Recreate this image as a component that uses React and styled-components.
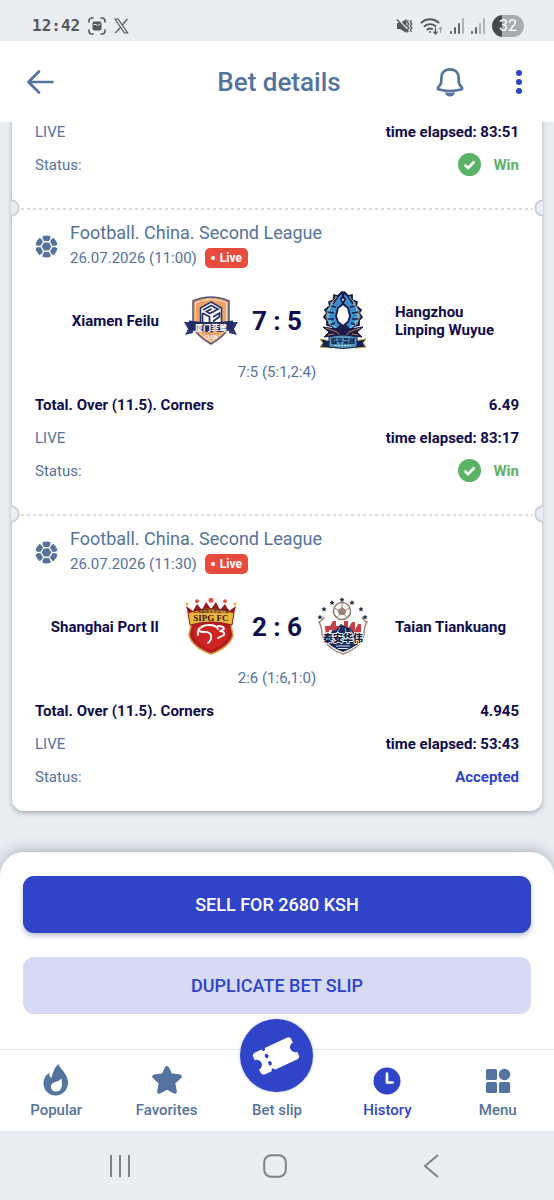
import React from 'react';
import styled, { createGlobalStyle } from 'styled-components';

const c = {
  page: '#eaeef3',
  slate: '#55739f',
  navy: '#0f0b4f',
  blue: '#3044c8',
  green: '#5bb368',
  red: '#e84c3d',
  system: '#7f8289',
};

const Global = createGlobalStyle`
  * { box-sizing: border-box; }
  body { margin: 0; background: ${c.page}; font-family: Roboto, "Noto Sans CJK SC", sans-serif; }
  button { font: inherit; border: 0; padding: 0; background: none; cursor: pointer; }
  svg { display: block; flex: none; }
`;

const Screen = styled.div`
  min-height: 100vh;
  display: flex;
  flex-direction: column;
  overflow: hidden;
`;

const StatusBar = styled.div`
  height: 41px;
  padding: 10px 30px 0 32px;
  display: flex;
  align-items: center;
  justify-content: space-between;
  color: #55585c;
`;

const StatusGroup = styled.div`
  display: flex;
  align-items: center;
  gap: ${(p) => p.$gap}px;
`;

const Clock = styled.time`
  font: bold 16px/20px "DejaVu Sans Mono", monospace;
`;

const Battery = styled.span`
  width: 32px;
  height: 22px;
  border-radius: 11px;
  display: flex;
  align-items: center;
  justify-content: center;
  background: linear-gradient(90deg, #45474a 32%, #a9acb0 32%);
  color: #fff;
  font-size: 16px;
  line-height: 22px;
`;

const Header = styled.header`
  position: relative;
  z-index: 1;
  height: 81px;
  padding: 0 32px 0 24px;
  display: grid;
  grid-template-columns: 1fr auto 1fr;
  align-items: center;
  background: #fff;
  color: ${c.slate};
`;

const Title = styled.h1`
  margin: 0;
  padding-left: 12px;
  font-size: 26px;
  line-height: 32px;
  font-weight: 500;
`;

const HeaderActions = styled.div`
  display: flex;
  align-items: center;
  justify-content: flex-end;
  gap: 52px;
`;

const IconButton = styled.button`
  justify-self: start;
  display: flex;
  color: ${(p) => (p.$accent ? c.blue : c.slate)};
`;

const Content = styled.main`
  flex: 1;
  margin-top: -7px;
  padding: 0 12px 41px;
`;

const Slip = styled.div`
  background: #fff;
  border-radius: 0 0 12px 12px;
  box-shadow: 0 2px 5px rgba(60, 66, 90, 0.4);
`;

const Event = styled.section`
  position: relative;
  padding: 0 23px 27px;

  & + & {
    padding-top: 13px;
    background: repeating-linear-gradient(90deg, #d8dce5 0 3px, transparent 3px 6px) 9px 0 / calc(100% - 18px) 2px no-repeat;
  }
  &:last-child { padding-bottom: 18px; }
`;

const Notch = styled.i`
  position: absolute;
  top: -9px;
  ${(p) => p.$side}: -1px;
  width: 10px;
  height: 18px;
  background: radial-gradient(circle at ${(p) => p.$side} center, ${c.page} 0 6px, #c3c7d0 8px, transparent 9px);
`;

const EventHead = styled.div`
  display: flex;
  align-items: center;
  gap: 12px;
  color: ${c.slate};
`;

const League = styled.div`
  font-size: 18px;
  line-height: 24px;
`;

const Kickoff = styled.div`
  display: flex;
  align-items: center;
  gap: 8px;
  font-size: 15px;
  line-height: 26px;
`;

const LiveTag = styled.span`
  height: 20px;
  padding: 0 6px;
  display: flex;
  align-items: center;
  gap: 5px;
  border-radius: 5px;
  background: ${c.red};
  color: #fff;
  font-size: 12px;
  line-height: 20px;
  font-weight: 700;

  &::before {
    content: '';
    width: 4px;
    height: 4px;
    border-radius: 50%;
    background: #fff;
  }
`;

const Match = styled.div`
  height: 60px;
  margin-top: 20px;
  display: grid;
  grid-template-columns: 1fr 56px 76px 56px 1fr;
  align-items: center;
  color: ${c.navy};
`;

const Team = styled.div`
  padding: ${(p) => (p.$home ? '0 24px 0 0' : '0 8px 0 24px')};
  text-align: ${(p) => (p.$home ? 'right' : 'left')};
  font-size: 15px;
  line-height: 18px;
  font-weight: 700;
`;

const Score = styled.div`
  text-align: center;
  font-size: 26px;
  line-height: 32px;
  font-weight: 700;
`;

const Periods = styled.div`
  margin: 9px 0 4px;
  text-align: center;
  color: ${c.slate};
  font-size: 15px;
  line-height: 24px;
`;

const Row = styled.div`
  height: 33px;
  display: flex;
  align-items: center;
  justify-content: space-between;
  color: ${(p) => (p.$strong ? c.navy : c.slate)};
  font-size: 15px;
  font-weight: ${(p) => (p.$strong ? 700 : 400)};
`;

const Value = styled.span`
  display: flex;
  align-items: center;
  gap: 12px;
  color: ${(p) => p.$color || c.navy};
  font-weight: 700;
`;

const Sheet = styled.div`
  position: relative;
  padding: 24px 23px 35px;
  display: grid;
  gap: 24px;
  background: #fff;
  border-radius: 24px 24px 0 0;
  box-shadow: 0 -2px 14px rgba(60, 66, 90, 0.35);
`;

const SheetButton = styled.button`
  height: 57px;
  border-radius: 11px;
  background: ${(p) => (p.$primary ? c.blue : '#d6daf4')};
  color: ${(p) => (p.$primary ? '#fff' : c.blue)};
  box-shadow: ${(p) => (p.$primary ? '0 3px 5px rgba(40, 50, 110, 0.3)' : 'none')};
  font-size: 18px;
  font-weight: 500;
`;

const TabBar = styled.nav`
  position: relative;
  height: 82px;
  padding: 0 1px;
  display: grid;
  grid-template-columns: repeat(5, 1fr);
  background: #fff;
  border-top: 1px solid #e3e6ec;
`;

const Tab = styled.button`
  position: relative;
  padding-bottom: 10px;
  display: flex;
  flex-direction: column;
  align-items: center;
  justify-content: flex-end;
  gap: 3px;
  color: ${(p) => (p.$active ? c.blue : c.slate)};
  font-size: 15px;
  line-height: 22px;
  font-weight: 500;
`;

const SlipBadge = styled.span`
  position: absolute;
  top: -31px;
  left: calc(50% - 37px);
  width: 73px;
  height: 73px;
  border-radius: 50%;
  display: flex;
  align-items: center;
  justify-content: center;
  background: ${c.blue};
  color: #fff;
  box-shadow: 0 0 3px rgba(48, 68, 200, 0.35);
`;

const SystemNav = styled.nav`
  height: 69px;
  padding: 0 45px 0 42px;
  display: grid;
  grid-template-columns: repeat(3, 1fr);
  align-items: center;
  justify-items: center;
`;

const SystemButton = styled.button`
  display: flex;
  color: ${c.system};
`;

/* ---------- icons ---------- */

const CaptureIcon = () => (
  <svg width="18" height="18" viewBox="0 0 18 18" fill="none" stroke="currentColor" strokeWidth="1.6" strokeLinecap="round">
    <path d="M1 5V4a3 3 0 0 1 3-3h1M13 1h1a3 3 0 0 1 3 3v1M17 13v1a3 3 0 0 1-3 3h-1M5 17H4a3 3 0 0 1-3-3v-1" />
    <rect x="4.500" y="4.500" width="9" height="9" rx="2" fill="currentColor" stroke="none" />
    <path d="M6 7.500h2l1.500 1 2.500-1.500" stroke={c.page} strokeWidth="1" />
  </svg>
);

const XIcon = () => (
  <svg width="15" height="16" viewBox="0 0 15 16" fill="none" stroke="currentColor" strokeWidth="1.2">
    <path d="M1 1h3.2l9.4 14h-3.2zM13.5 1L8.2 7M6.3 9.3L1.2 15" />
  </svg>
);

const MuteIcon = () => (
  <svg width="17" height="16" viewBox="0 0 17 16">
    <path d="M1 5h3L10.500 1v14L4 11H1z" fill="currentColor" />
    <path d="M2 1l11 12" stroke={c.page} strokeWidth="1.300" />
    <path d="M1 1.500l11 12.500" stroke="currentColor" strokeWidth="1.300" />
    <path d="M12.300 2l-1 2 1.500 2-1.500 2 1.500 2-1.500 2 1 2M15.300 2l-1 2 1.500 2-1.500 2 1.500 2-1.500 2 1 2" fill="none" stroke="currentColor" strokeWidth="1.300" />
  </svg>
);

const WifiIcon = () => (
  <svg width="23" height="18" viewBox="0 0 23 18" fill="none" stroke="currentColor" strokeWidth="2" strokeLinecap="round">
    <path d="M1.500 5.500a13 13 0 0 1 17 0M4.500 9.200a9 9 0 0 1 11-.2M7.500 12.500a4 4 0 0 1 4.500-.5" />
    <circle cx="10" cy="15" r="1" fill="currentColor" stroke="none" />
    <path d="M15.500 11v5.500M13.800 15l1.700 2 1.700-2" strokeWidth="1.300" />
    <path d="M20.500 15.500v-5M19 12l1.500-1.700L22 12" strokeWidth="1.100" stroke="#9b9ea3" />
  </svg>
);

const SignalIcon = ({ level }) => (
  <svg width="14" height="16" viewBox="0 0 14 16" strokeWidth="1.800" strokeLinecap="round">
    {[14, 10, 6, 1].map((y, i) => (
      <path key={y} d={`M${1 + i * 4} ${y}V15`} stroke={i < level ? 'currentColor' : '#a9acb1'} />
    ))}
  </svg>
);

const BackIcon = () => (
  <svg width="30" height="26" viewBox="0 0 30 26" fill="none" stroke="currentColor" strokeWidth="2.700" strokeLinecap="round" strokeLinejoin="round">
    <path d="M28.500 13H4.500M15 2.500L4.500 13 15 23.500" />
  </svg>
);

const BellIcon = () => (
  <svg width="28" height="30" viewBox="0 0 28 30" fill="none" stroke="currentColor" strokeWidth="2.700" strokeLinejoin="round">
    <path d="M14 2.300c-5.600 0-8.600 3.700-8.600 8.700 0 5-.4 7-3.400 9.500v1.800c7 2 17 2 24 0v-1.800c-3-2.500-3.400-4.500-3.400-9.500 0-5-3-8.700-8.600-8.700z" />
    <path d="M9 25.300c3 .5 7 .5 10 0-.6 3-2.600 4.200-5 4.200s-4.400-1.200-5-4.200z" fill="currentColor" stroke="none" />
  </svg>
);

const DotsIcon = () => (
  <svg width="6" height="26" viewBox="0 0 6 26" fill="currentColor">
    <circle cx="3" cy="4" r="3" />
    <circle cx="3" cy="13" r="3" />
    <circle cx="3" cy="22" r="3" />
  </svg>
);

const BallIcon = () => (
  <svg width="23" height="23" viewBox="-12 -12 24 24">
    <circle r="11.500" fill={c.slate} />
    {[0, 60, 120, 180, 240, 300].map((a) => (
      <g key={a} transform={`rotate(${a})`}>
        <path d="M5 0H9" stroke="#fff" strokeWidth="1.400" />
        <path d="M8 0L12.500-2.500 11.500 0 12.500 2.500z" fill="#fff" />
      </g>
    ))}
    <path d="M-2.900-5h5.800L5.800 0 2.900 5h-5.800L-5.800 0z" fill={c.slate} stroke="#fff" strokeWidth="1.400" />
  </svg>
);

const CheckIcon = () => (
  <svg width="23" height="23" viewBox="0 0 23 23">
    <circle cx="11.500" cy="11.500" r="11.500" fill={c.green} />
    <path d="M6.700 11.800l3.400 3.300 6.300-6.600" fill="none" stroke="#fff" strokeWidth="2.700" />
  </svg>
);

const FlameIcon = () => (
  <svg width="26" height="32" viewBox="0 0 26 32">
    <path d="M15.500 0c.5 4.500 9.500 9 9.500 18.500C25 26 19.500 31.500 12.700 31.500S.5 26 .5 19.500C.5 14.500 3 11 6.200 8.700c0 2.500.5 4.300 2.300 5.300C9.800 9 11 4 15.500 0z" fill="currentColor" />
    <path d="M18.500 14.500c.6 3 .5 5.500.2 8-.4 3-2.600 5-5.500 5-3.300 0-5.200-2.200-5.200-4.800 0-3 2.300-4.200 5-5 2.300-.7 4.200-1.500 5.500-3.200z" fill="#fff" />
  </svg>
);

const StarIcon = () => (
  <svg width="32" height="32" viewBox="0 0 32 32" fill="currentColor" stroke="currentColor" strokeWidth="4" strokeLinejoin="round">
    <path d="M16 4l3.600 7.300 9.200 1.300-6.600 6.200 1.700 8.900-7.900-4.300-7.900 4.300 1.700-8.900-6.600-6.200 9.200-1.300z" />
  </svg>
);

const HistoryIcon = () => (
  <svg width="28" height="30" viewBox="0 0 28 30">
    <circle cx="14" cy="15" r="13.500" fill="currentColor" />
    <path d="M14 7.500v9h5.500" fill="none" stroke="#fff" strokeWidth="2.700" strokeLinecap="round" strokeLinejoin="round" />
  </svg>
);

const MenuIcon = () => (
  <svg width="26" height="30" viewBox="0 0 26 30" fill="currentColor">
    <rect x="1" y="3" width="11" height="11" rx="1.500" />
    <circle cx="19.500" cy="8.500" r="5.700" />
    <rect x="1" y="16" width="11" height="11" rx="1.500" />
    <rect x="14" y="16" width="11" height="11" rx="1.500" />
  </svg>
);

const TicketIcon = () => (
  <svg width="50" height="44" viewBox="-25 -22 50 44">
    <g transform="rotate(-25)">
      <path d="M-17.500-12H17.500Q21-12 21-8.500V-5A5 5 0 0 0 21 5V8.500Q21 12 17.500 12H-17.500Q-21 12-21 8.500V5A5 5 0 0 0-21-5V-8.500Q-21-12-17.500-12z" fill="currentColor" />
      <g fill={c.blue}>
        <ellipse cx="-8.500" cy="-12" rx="1.700" ry="2.300" />
        <ellipse cx="-8.500" cy="-4" rx="1.800" ry="2.300" />
        <ellipse cx="-8.500" cy="4" rx="1.800" ry="2.300" />
        <ellipse cx="-8.500" cy="12" rx="1.700" ry="2.300" />
      </g>
    </g>
  </svg>
);

const RecentsIcon = () => (
  <svg width="22" height="22" viewBox="0 0 22 22" stroke="currentColor" strokeWidth="2">
    <path d="M2 0v22M11 0v22M20 0v22" />
  </svg>
);

const HomeIcon = () => (
  <svg width="24" height="24" viewBox="0 0 24 24" fill="none" stroke="currentColor" strokeWidth="2">
    <rect x="1.200" y="1.200" width="21.600" height="21.600" rx="7" />
  </svg>
);

const PrevIcon = () => (
  <svg width="16" height="24" viewBox="0 0 16 24" fill="none" stroke="currentColor" strokeWidth="2">
    <path d="M15 1L2 12l13 11" />
  </svg>
);

/* ---------- club crests ---------- */

const XiamenCrest = () => (
  <svg width="56" height="60" viewBox="0 0 56 60">
    <path d="M10 10Q28 2 46 10V34Q45 43 28 53 11 43 10 34z" fill="#f0a063" stroke="#4d5784" strokeWidth="1.500" />
    <path d="M12.500 12Q28 5 43.500 12V34Q42 42 28 50.500 14 42 12.500 34z" fill="none" stroke="#fbe3d0" strokeWidth="1" />
    <path d="M28 11l10.500 6V32h-21V17z" fill="#fff" stroke="#26336e" strokeWidth="1.500" />
    <path d="M20 19l8-4.500 7 3.500-8 4.500-3.500-2 5-2.800M19.500 22l7 3.700V32M19.500 22v9M30 26l6.500-4v3.500l-6.500 5" fill="none" stroke="#26336e" strokeWidth="1.800" />
    <path d="M1 31l9 0v11l-8 2 3-6zM55 31l-9 0v11l8 2-3-6z" fill="#2d3970" />
    <path d="M6 29.500Q28 33 50 29.500V39Q28 43.500 6 39z" fill="#202d69" />
    <text x="28" y="39.500" textAnchor="middle" fontSize="8" fontWeight="900" fill="#fff">厦门菲鹭</text>
    <text x="28" y="47.500" textAnchor="middle" fontSize="5" fontWeight="700" fill="#fff">CLUB</text>
  </svg>
);

const HangzhouCrest = () => (
  <svg width="56" height="60" viewBox="0 0 56 60">
    {[1, -1].map((s) => (
      <g key={s} transform={s === 1 ? undefined : 'translate(56 0) scale(-1 1)'} strokeLinejoin="round">
        <path d="M27 1l-4 4-4-1 0 5-5 2 1 4-5 4 2 3-3 4 3 3 0 5 5 1 5 5 6 2V35l-5-4-2-6 2-8 5-4-2-5 2-2z" fill="#3b8cc9" stroke="#14184a" strokeWidth="1.800" />
        <path d="M18 11l-4 7-1 8 3 7 5 4" fill="none" stroke="#66bce8" strokeWidth="2" />
        <path d="M24 4l-6 9M15 15l6 1M12 21l7 1M12 28l7 0M15 34l5-2" fill="none" stroke="#1a2258" strokeWidth="1.500" />
        <path d="M22 6l-5 5-1 4-4 5v8l4 7" fill="none" stroke="#c39f4d" strokeWidth="1" />
        <path d="M8 36l13 2 4-4 3 4v11l-7-2-4-2-8 1 5-5z" fill="#1b1c4d" stroke="#15173f" strokeWidth="1" />
        <path d="M11 37l11 4 4 5M13 44l6-1" fill="none" stroke="#c47a3c" strokeWidth="1" />
        <path d="M5 48l11 2v7L5 56l3-4z" fill="#14234f" stroke="#bb9a50" strokeWidth="1" />
      </g>
    ))}
    <path d="M14 46q14-4 28 0v10q-14 3-28 0z" fill="#5396b8" stroke="#14234f" strokeWidth="1" />
    <text x="28" y="52" textAnchor="middle" fontSize="6" fontWeight="900" fill="#14234c">临平吴越</text>
    <path d="M20 54.500h16" stroke="#b9d6e0" strokeWidth="1" strokeDasharray="2 1" />
  </svg>
);

const ShanghaiCrest = () => (
  <svg width="56" height="60" viewBox="0 0 56 60">
    <path d="M3 9l7 5 4-7 5 6 4-8 5 7 5-7 4 8 5-6 4 7 7-5-3 12H6z" fill="#971d21" />
    <path d="M6 18Q28 10 50 18L48 29 50 38Q47 50 28 57 9 50 6 38L8 29z" fill="#b51c20" stroke="#d59b40" strokeWidth="1.500" />
    <path d="M5 16Q28 7 51 16L49 28Q28 22 7 28z" fill="#edb63d" stroke="#8d2420" strokeWidth="1" />
    <path d="M11 30Q28 25 45 30V39Q42 47 28 53 14 47 11 39z" fill="#cf2425" />
    <text x="28" y="15.500" textAnchor="middle" fontSize="4" fontWeight="700" fill="#651b18">上海集团足球俱乐部</text>
    <text x="28" y="23.500" textAnchor="middle" fontFamily="Liberation Serif, serif" fontSize="9" fontWeight="700" fill="#35130f">SIPG FC</text>
    <path d="M15 38v-4q3-6 11-6 7 0 9 4M15 34l5 1q6-1 8 3 1 5-3 8M35 29q6 0 6 3l-4 2q5 0 4 4l-6 3" fill="none" stroke="#fff" strokeWidth="1.800" strokeLinecap="round" strokeLinejoin="round" />
    <g fill="#e6513a">
      <circle cx="28" cy="3.200" r="2.500" />
      <circle cx="14" cy="4.200" r="1.900" />
      <circle cx="42" cy="4.200" r="1.900" />
      <circle cx="4" cy="7" r="1.500" fill="#e7b23d" />
      <circle cx="52" cy="7" r="1.500" fill="#e7b23d" />
    </g>
  </svg>
);

const TaianCrest = () => (
  <svg width="56" height="60" viewBox="0 0 56 60">
    <path d="M9 20Q7 24 4 25 7 30 7 37 9 50 28 57 47 50 49 37 49 30 52 25 49 24 47 20" fill="#fff" stroke="#a58c7a" strokeWidth="1.500" />
    <path d="M10 29h5l3-5h3v5h4v4h-4v8h-4v-8h-3v8h-3zM29 24h4v8l4-7h3v8l3-6h3v14h-4l-2-5-3 5h-4l-4-8z" fill="#c83e45" />
    <circle cx="27" cy="14" r="8.500" fill="#fff" stroke="#8f7b70" strokeWidth="1.500" />
    <path d="M27 10.500l4 3-1.500 4h-5L23 13.500zM27 10V6M31 13l4-2M29.500 17.500l3 3.500M24.500 17.500l-3 3.500M23 13l-4-2" fill="#9b8373" stroke="#9b8373" />
    <path d="M12 42l5-8 4-1 5-6 5 3 4 1 9 11v4Q38 51 28 55 18 51 13 46z" fill="#182b58" />
    <path d="M25 30l-3 6M30 31l1 5M35 33l3 4" stroke="#8ba6c0" strokeWidth="1" />
    <text x="28" y="45" textAnchor="middle" fontSize="10" fontWeight="900" fill="#151d40" stroke="#fff" strokeWidth="1.500" paintOrder="stroke">泰安华伟</text>
    <path d="M21 49h14M23 51.500h10" stroke="#d9e1ed" strokeWidth="1" />
    <g fill="#202947">
      {[[5, 20], [9, 12], [17, 5.500], [27, 2.500], [37, 5.500], [46, 12], [50, 20]].map(([x, y]) => (
        <path key={x} transform={`translate(${x} ${y})`} d="M0-2.500l.8 1.700 1.800.2-1.300 1.200.3 1.800L0 1.500l-1.600.9.3-1.800-1.300-1.200 1.800-.2z" />
      ))}
    </g>
  </svg>
);

/* ---------- data ---------- */

const events = [
  { id: 1, elapsed: '83:51', won: true },
  {
    id: 2, date: '26.07.2026 (11:00)', home: 'Xiamen Feilu', away: 'Hangzhou Linping Wuyue',
    HomeCrest: XiamenCrest, AwayCrest: HangzhouCrest, score: '7 : 5', periods: '7:5 (5:1,2:4)',
    odds: '6.49', elapsed: '83:17', won: true,
  },
  {
    id: 3, date: '26.07.2026 (11:30)', home: 'Shanghai Port II', away: 'Taian Tiankuang',
    HomeCrest: ShanghaiCrest, AwayCrest: TaianCrest, score: '2 : 6', periods: '2:6 (1:6,1:0)',
    odds: '4.945', elapsed: '53:43', won: false,
  },
];

const EventDetails = ({ event }) => {
  const { HomeCrest, AwayCrest } = event;
  return (
    <>
      <Notch $side="left" />
      <Notch $side="right" />
      <EventHead>
        <BallIcon />
        <div>
          <League>Football. China. Second League</League>
          <Kickoff>{event.date}<LiveTag>Live</LiveTag></Kickoff>
        </div>
      </EventHead>
      <Match>
        <Team $home>{event.home}</Team>
        <HomeCrest />
        <Score>{event.score}</Score>
        <AwayCrest />
        <Team>{event.away}</Team>
      </Match>
      <Periods>{event.periods}</Periods>
      <Row $strong><span>Total. Over (11.5). Corners</span><Value>{event.odds}</Value></Row>
    </>
  );
};

export default function App() {
  return (
    <Screen>
      <Global />
      <StatusBar>
        <StatusGroup $gap={8}>
          <Clock>12:42</Clock>
          <CaptureIcon />
          <XIcon />
        </StatusGroup>
        <StatusGroup $gap={7}>
          <MuteIcon />
          <WifiIcon />
          <SignalIcon level={3} />
          <SignalIcon level={2} />
          <Battery>32</Battery>
        </StatusGroup>
      </StatusBar>

      <Header>
        <IconButton aria-label="Back"><BackIcon /></IconButton>
        <Title>Bet details</Title>
        <HeaderActions>
          <IconButton aria-label="Notifications"><BellIcon /></IconButton>
          <IconButton $accent aria-label="More"><DotsIcon /></IconButton>
        </HeaderActions>
      </Header>

      <Content>
        <Slip>
          {events.map((event) => (
            <Event key={event.id}>
              {event.date && <EventDetails event={event} />}
              <Row><span>LIVE</span><Value>time elapsed: {event.elapsed}</Value></Row>
              <Row>
                <span>Status:</span>
                {event.won
                  ? <Value $color={c.green}><CheckIcon />Win</Value>
                  : <Value $color={c.blue}>Accepted</Value>}
              </Row>
            </Event>
          ))}
        </Slip>
      </Content>

      <Sheet>
        <SheetButton $primary>SELL FOR 2680 KSH</SheetButton>
        <SheetButton>DUPLICATE BET SLIP</SheetButton>
      </Sheet>

      <TabBar>
        <Tab><FlameIcon />Popular</Tab>
        <Tab><StarIcon />Favorites</Tab>
        <Tab><SlipBadge><TicketIcon /></SlipBadge>Bet slip</Tab>
        <Tab $active><HistoryIcon />History</Tab>
        <Tab><MenuIcon />Menu</Tab>
      </TabBar>

      <SystemNav>
        <SystemButton aria-label="Recent apps"><RecentsIcon /></SystemButton>
        <SystemButton aria-label="Home"><HomeIcon /></SystemButton>
        <SystemButton aria-label="Go back"><PrevIcon /></SystemButton>
      </SystemNav>
    </Screen>
  );
}
